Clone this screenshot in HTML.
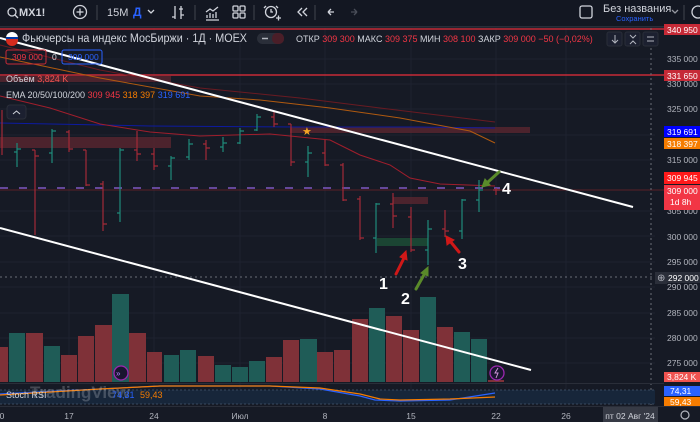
<!DOCTYPE html>
<html><head><meta charset="utf-8"><style>
body{margin:0;width:700px;height:422px;background:#161a25;overflow:hidden;font-family:"Liberation Sans",sans-serif;}
svg{display:block}
text{font-family:"Liberation Sans",sans-serif}
</style></head><body>
<svg width="700" height="422" xmlns="http://www.w3.org/2000/svg">
<rect width="700" height="422" fill="#161a25"/>
<rect width="700" height="26" fill="#131722"/>
<rect y="26" width="700" height="1.5" fill="#2a2e39"/>
<g fill="none" stroke="#d1d4dc" stroke-width="1.3">
<circle cx="12" cy="12" r="4"/><line x1="15" y1="15" x2="18" y2="18"/>
<circle cx="80" cy="12" r="6.5"/><line x1="76.5" y1="12" x2="83.5" y2="12"/><line x1="80" y1="8.5" x2="80" y2="15.5"/>
<line x1="97" y1="5" x2="97" y2="20" stroke="#363a45"/>
<path d="M148 10l3 3 3-3"/>
<path d="M175 6v13M172 17h3M181 6v13M179 9h4M184 15h-3"/>
<line x1="195" y1="5" x2="195" y2="20" stroke="#363a45"/>
<path d="M206 20h13M207 18v-3M210 18v-5M213 18v-4M216 18v-6M206 12l4-3 3 2 5-4"/>
<rect x="233" y="6" width="5" height="5" rx="1"/><rect x="240" y="6" width="5" height="5" rx="1"/><rect x="233" y="13" width="5" height="5" rx="1"/><rect x="240" y="13" width="5" height="5" rx="1"/>
<line x1="254" y1="5" x2="254" y2="20" stroke="#363a45"/>
<circle cx="271" cy="12" r="5.5"/><path d="M271 9v3h2M266 6l-2 2M276 6l2 2M276 18h5M278.5 15.5v5"/>
<path d="M302 8l-4 4 4 4M307 8l-4 4 4 4"/>
<line x1="315" y1="5" x2="315" y2="20" stroke="#363a45"/>
<path d="M334 12h-6M328 12l3-3M328 12l3 3" />
<path d="M351 12h6M357 12l-3-3M357 12l-3 3" stroke="#4a4e59"/>
<rect x="580" y="6" width="12" height="12" rx="2"/>
<path d="M672 10l3 3 3-3" stroke="#9598a1"/>
<line x1="684" y1="5" x2="684" y2="20" stroke="#363a45"/>
<circle cx="698" cy="12" r="6"/>
</g>
<text x="19" y="16" font-size="11" font-weight="bold" fill="#d1d4dc">MX1!</text>
<text x="107" y="16" font-size="11" fill="#d1d4dc">15M</text>
<text x="133" y="16" font-size="12" font-weight="bold" fill="#2962ff">Д</text>
<text x="603" y="12" font-size="11" fill="#d1d4dc">Без названия</text>
<text x="616" y="21" font-size="7.5" fill="#2962ff">Сохранить</text>

<g stroke="#1e2230" stroke-width="1">
<line x1="0" y1="59" x2="655" y2="59"/><line x1="0" y1="84" x2="655" y2="84"/><line x1="0" y1="109" x2="655" y2="109"/><line x1="0" y1="135" x2="655" y2="135"/><line x1="0" y1="160" x2="655" y2="160"/><line x1="0" y1="211" x2="655" y2="211"/><line x1="0" y1="236" x2="655" y2="236"/><line x1="0" y1="262" x2="655" y2="262"/><line x1="0" y1="287" x2="655" y2="287"/><line x1="0" y1="313" x2="655" y2="313"/><line x1="0" y1="338" x2="655" y2="338"/><line x1="0" y1="363" x2="655" y2="363"/>
<line x1="69" y1="28" x2="69" y2="405"/><line x1="154" y1="28" x2="154" y2="405"/><line x1="240" y1="28" x2="240" y2="405"/><line x1="325" y1="28" x2="325" y2="405"/><line x1="411" y1="28" x2="411" y2="405"/><line x1="496" y1="28" x2="496" y2="405"/><line x1="566" y1="28" x2="566" y2="405"/>
</g>

<g>
<rect x="0" y="347" width="8" height="35" fill="#7f3138"/>
<rect x="9" y="333" width="16" height="49" fill="#1f5c57"/>
<rect x="26" y="333" width="17" height="49" fill="#7f3138"/>
<rect x="44" y="346" width="16" height="36" fill="#1f5c57"/>
<rect x="61" y="355" width="16" height="27" fill="#7f3138"/>
<rect x="78" y="336" width="16" height="46" fill="#7f3138"/>
<rect x="95" y="325" width="17" height="57" fill="#7f3138"/>
<rect x="112" y="294" width="17" height="88" fill="#1f5c57"/>
<rect x="129" y="333" width="17" height="49" fill="#7f3138"/>
<rect x="147" y="352" width="15" height="30" fill="#7f3138"/>
<rect x="164" y="355" width="15" height="27" fill="#1f5c57"/>
<rect x="180" y="350" width="16" height="32" fill="#1f5c57"/>
<rect x="198" y="356" width="16" height="26" fill="#7f3138"/>
<rect x="215" y="365" width="16" height="17" fill="#1f5c57"/>
<rect x="232" y="367" width="16" height="15" fill="#1f5c57"/>
<rect x="249" y="361" width="16" height="21" fill="#1f5c57"/>
<rect x="266" y="357" width="16" height="25" fill="#7f3138"/>
<rect x="283" y="340" width="16" height="42" fill="#7f3138"/>
<rect x="300" y="339" width="17" height="43" fill="#1f5c57"/>
<rect x="317" y="352" width="16" height="30" fill="#7f3138"/>
<rect x="334" y="350" width="16" height="32" fill="#7f3138"/>
<rect x="352" y="319" width="16" height="63" fill="#7f3138"/>
<rect x="369" y="308" width="16" height="74" fill="#1f5c57"/>
<rect x="386" y="316" width="16" height="66" fill="#7f3138"/>
<rect x="403" y="330" width="16" height="52" fill="#7f3138"/>
<rect x="420" y="297" width="16" height="85" fill="#1f5c57"/>
<rect x="437" y="327" width="16" height="55" fill="#7f3138"/>
<rect x="454" y="332" width="16" height="50" fill="#1f5c57"/>
<rect x="471" y="339" width="16" height="43" fill="#1f5c57"/>
<rect x="488" y="380" width="16" height="2" fill="#7f3138"/>
</g>
<circle cx="121" cy="373" r="7" fill="#1a1530" stroke="#9c27b0" stroke-width="1.3"/><text x="116" y="376" font-size="8" fill="#b388ff">»</text>
<circle cx="497" cy="373" r="7" fill="#1a1530" stroke="#9c27b0" stroke-width="1.3"/><path d="M498 368l-3 5h3l-2 5" stroke="#ce93d8" fill="none" stroke-width="1"/>

<rect x="0" y="137" width="171" height="11" fill="#5a2530" opacity="0.8"/>
<rect x="290" y="127" width="240" height="6" fill="#5a2530" opacity="0.8"/>
<rect x="393" y="197" width="35" height="7" fill="#5a2530" opacity="0.8"/>
<rect x="377" y="238" width="51" height="8" fill="#1c4a35" opacity="0.9"/>
<rect x="0" y="76" width="171" height="6" fill="#5a2530" opacity="0.8"/>

<line x1="0" y1="29" x2="664" y2="29" stroke="#c62a37" stroke-width="1.5"/>
<line x1="0" y1="75" x2="664" y2="75" stroke="#c62a37" stroke-width="1.5"/>
<line x1="0" y1="188" x2="500" y2="188" stroke="#7e57c2" stroke-width="1.5" stroke-dasharray="8,11"/>
<line x1="0" y1="190" x2="664" y2="190" stroke="#5a2028" stroke-width="1"/>
<line x1="0" y1="277" x2="664" y2="277" stroke="#6a6d78" stroke-width="1" stroke-dasharray="2,3"/>
<line x1="651" y1="28" x2="651" y2="405" stroke="#6a6d78" stroke-width="1" stroke-dasharray="2,3"/>

<polyline fill="none" stroke="#0d1aa0" stroke-width="1" points="0,123 150,126 300,127 420,127 495,128"/>
<polyline fill="none" stroke="#b05a10" stroke-width="1" points="0,57 100,78 200,96 260,100 330,108 400,118 470,131 495,143"/>
<polyline fill="none" stroke="#6a1a22" stroke-width="1" points="0,45 100,70 200,88 300,98 380,108 495,122"/>
<polyline fill="none" stroke="#a01e2c" stroke-width="1" points="0,96 50,108 100,124 150,132 200,136 270,134 310,138 330,140 350,150 360,155 390,165 410,178 440,184 495,186"/>

<g stroke-width="1.2" fill="none">
<g stroke="#a32a37"><path d="M2 110v45M35 150v85M32 150h3M35 156h4M69 130v22M66 132h3M69 149h4M86 150v36M83 150h3M86 185h4M103 181v50M100 184h3M103 224h4M137 131v30M134 150h3M137 154h4M154 148v22M151 154h3M154 166h4M206 140v20M203 144h3M206 148h4M274 112v15M271 117h3M274 124h4M291 124v42M288 124h3M291 162h4M325 140v26M322 153h3M325 165h4M343 163v38M340 165h3M343 200h4M360 196v44M357 199h3M360 238h4M393 193v35M390 204h3M393 216h4M411 207v45M408 217h3M411 250h4M445 210v27M442 229h3M445 231h4M496 188v7M493 190h3M496 190h4"/></g>
<g stroke="#1f8a7a"><path d="M17 143v24M14 152h3M17 149h4M52 129v34M49 153h3M52 131h4M120 148v74M117 213h3M120 150h4M171 156v24M168 166h3M171 158h4M189 139v21M186 157h3M189 144h4M223 137v15M220 147h3M223 143h4M240 128v16M237 143h3M240 131h4M257 114v17M254 130h3M257 117h4M308 146v31M305 162h3M308 153h4M376 203v50M373 238h3M376 204h4M428 220v45M425 250h3M428 229h4M462 199v40M459 231h3M462 200h4M479 180v32M476 200h3M479 190h4"/></g>
</g>

<line x1="0" y1="38" x2="633" y2="207" stroke="#fff" stroke-width="2"/>
<line x1="0" y1="228" x2="531" y2="370" stroke="#fff" stroke-width="2"/>
<text x="302" y="135" font-size="11" fill="#f5a623">★</text>

<g stroke-width="3" fill="none" stroke-linecap="round">
<path d="M396 274L405 256" stroke="#d01818"/><path d="M400 257l6-6 1 9z" fill="#d01818" stroke="#d01818" stroke-width="1"/>
<path d="M416 289L425 273" stroke="#5a8a2a"/><path d="M421 273l7-6 0 9z" fill="#5a8a2a" stroke="#5a8a2a" stroke-width="1"/>
<path d="M459 252L450 241" stroke="#d01818"/><path d="M447 245l-1-9 8 4z" fill="#d01818" stroke="#d01818" stroke-width="1"/>
<path d="M499 172L488 182" stroke="#5a8a2a"/><path d="M490 185l-8 2 3-8z" fill="#5a8a2a" stroke="#5a8a2a" stroke-width="1"/>
</g>
<g font-size="16" font-weight="bold" fill="#fff">
<text x="379" y="289">1</text><text x="401" y="304">2</text><text x="458" y="269">3</text><text x="502" y="194">4</text>
</g>

<line x1="0" y1="383.5" x2="664" y2="383.5" stroke="#2a2e39"/>
<rect x="0" y="390" width="655" height="14" fill="#17263a"/>
<line x1="0" y1="390" x2="655" y2="390" stroke="#3a4a60" stroke-dasharray="2,2"/>
<line x1="0" y1="404" x2="655" y2="404" stroke="#3a4a60" stroke-dasharray="2,2"/>
<polyline fill="none" stroke="#2962ff" stroke-width="1.2" points="0,394 100,389 160,386 270,386 320,389 360,396 375,400 400,401 450,400 495,393"/>
<polyline fill="none" stroke="#f57c00" stroke-width="1.2" points="0,395 100,389 160,386 270,386 320,388 360,394 380,399 400,400 450,399 495,397"/>
<text x="6" y="398" font-size="9" fill="#d1d4dc">Stoch RSI</text>
<text x="30" y="398" font-size="17" font-weight="bold" fill="#d1d4dc" opacity="0.25">TradingView</text>
<text x="112" y="398" font-size="9" fill="#2962ff">74,31</text><text x="140" y="398" font-size="9" fill="#f57c00">59,43</text>

<line x1="0" y1="406.5" x2="700" y2="406.5" stroke="#2a2e39"/>
<g font-size="8.5" fill="#b2b5be" text-anchor="middle">
<text x="2" y="419">0</text><text x="69" y="419">17</text><text x="154" y="419">24</text><text x="240" y="419">Июл</text><text x="325" y="419">8</text><text x="411" y="419">15</text><text x="496" y="419">22</text><text x="566" y="419">26</text>
</g>
<rect x="603" y="407" width="55" height="15" fill="#363a45"/>
<text x="630" y="419" font-size="8.5" fill="#d1d4dc" text-anchor="middle">пт 02 Авг '24</text>
<circle cx="685" cy="415" r="4" fill="none" stroke="#b2b5be" stroke-width="1.2"/>

<g font-size="8.5" fill="#b2b5be">
<text x="667" y="62">335 000</text><text x="667" y="87">330 000</text><text x="667" y="112">325 000</text><text x="667" y="163">315 000</text><text x="667" y="214">305 000</text><text x="667" y="240">300 000</text><text x="667" y="265">295 000</text><text x="667" y="290">290 000</text><text x="667" y="316">285 000</text><text x="667" y="341">280 000</text><text x="667" y="366">275 000</text>
</g>
<rect x="664" y="24" width="36" height="11" fill="#c62a37"/><text x="667" y="33" font-size="8.5" fill="#fff">340 950</text>
<rect x="664" y="70" width="36" height="11" fill="#c62a37"/><text x="667" y="79" font-size="8.5" fill="#fff">331 650</text>
<rect x="664" y="126" width="36" height="11" fill="#0000ff"/><text x="667" y="135" font-size="8.5" fill="#fff">319 691</text>
<rect x="664" y="138" width="36" height="11" fill="#f57c00"/><text x="667" y="147" font-size="8.5" fill="#fff">318 397</text>
<rect x="664" y="172" width="36" height="12" fill="#ff1a1a"/><text x="667" y="181" font-size="8.5" fill="#fff">309 945</text>
<rect x="664" y="185" width="36" height="25" fill="#f23645"/><text x="667" y="194" font-size="8.5" fill="#fff">309 000</text><text x="670" y="205" font-size="8.5" fill="#fff">1d 8h</text>
<rect x="655" y="272" width="12" height="12" fill="#2a2e39"/><text x="657" y="281" font-size="10" fill="#b2b5be">⊕</text>
<rect x="667" y="272" width="33" height="11" fill="#2a2e39"/><text x="668" y="281" font-size="8.5" fill="#fff">292 000</text>
<rect x="664" y="372" width="36" height="10" fill="#ef5350"/><text x="667" y="380" font-size="8.5" fill="#fff">3,824 K</text>
<rect x="664" y="386" width="36" height="10" fill="#2962ff"/><text x="670" y="394" font-size="8.5" fill="#fff">74,31</text>
<rect x="664" y="397" width="36" height="9" fill="#f57c00"/><text x="670" y="405" font-size="8.5" fill="#fff">59,43</text>

<circle cx="12" cy="38" r="6" fill="#fff"/><path d="M6 38h12v2a6 6 0 0 1-12 0z" fill="#d52b1e"/><rect x="6" y="37" width="12" height="2" fill="#0039a6"/>
<text x="22" y="42" font-size="11.5" fill="#d1d4dc" textLength="225" lengthAdjust="spacingAndGlyphs">Фьючерсы на индекс МосБиржи · 1Д · MOEX</text>
<rect x="257" y="33" width="27" height="11" rx="5.5" fill="#2a2e39"/><rect x="272" y="33" width="12" height="11" rx="5" fill="#4a1e28"/>
<line x1="262" y1="38.5" x2="268" y2="38.5" stroke="#b2b5be" stroke-width="1.5"/>
<text x="296" y="42" font-size="9" fill="#d1d4dc">ОТКР<tspan fill="#f23645"> 309 300</tspan>  МАКС<tspan fill="#f23645"> 309 375</tspan>  МИН<tspan fill="#f23645"> 308 100</tspan>  ЗАКР<tspan fill="#f23645"> 309 000  −50 (−0,02%)</tspan></text>
<g fill="#1c2030" stroke="#2a2e39"><rect x="607" y="32" width="15" height="14" rx="2"/><rect x="625" y="32" width="15" height="14" rx="2"/><rect x="643" y="32" width="15" height="14" rx="2"/></g>
<g stroke="#b2b5be" fill="none"><path d="M615 35v7M612 40l3 3 3-3M630 35l3 3 3-3M630 44l3-3 3 3M647 37h7M647 41h7"/></g>
<rect x="6" y="50" width="40" height="14" rx="2" fill="none" stroke="#c62a37"/><text x="12" y="60" font-size="8.5" fill="#f23645">309 000</text>
<text x="52" y="60" font-size="8.5" fill="#d1d4dc">0</text>
<rect x="62" y="50" width="40" height="14" rx="2" fill="none" stroke="#2962ff"/><text x="68" y="60" font-size="8.5" fill="#2962ff">309 000</text>
<text x="6" y="82" font-size="9" fill="#d1d4dc">Объём <tspan fill="#ef5350">3,824 K</tspan></text>
<text x="6" y="98" font-size="9" fill="#d1d4dc">EMA 20/50/100/200 <tspan fill="#f23645">309 945</tspan> <tspan fill="#f57c00">318 397</tspan> <tspan fill="#2962ff">319 691</tspan></text>
<rect x="7" y="105" width="19" height="14" rx="3" fill="#1c2030" stroke="#2a2e39"/><path d="M13 114l3.5-3 3.5 3" stroke="#d1d4dc" fill="none"/>
</svg>
</body></html>
